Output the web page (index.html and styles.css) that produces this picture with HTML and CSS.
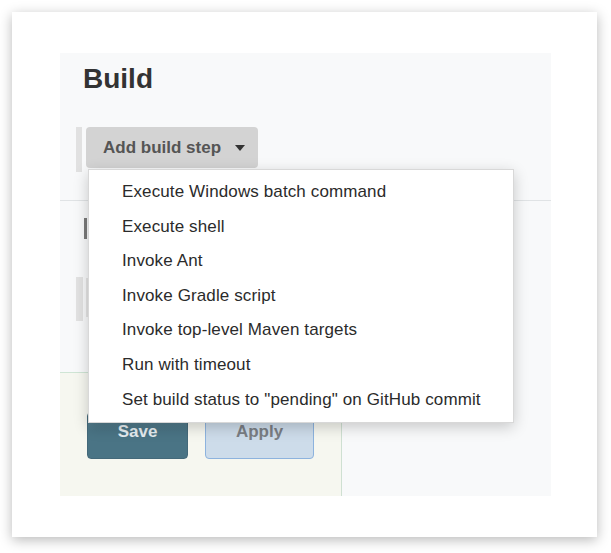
FILE: index.html
```html
<!DOCTYPE html>
<html>
<head>
<meta charset="utf-8">
<link rel="stylesheet" href="styles.css">
</head>
<body>
<div class="card">
  <div class="panel">
    <h1 class="title">Build</h1>
    <div class="toolbar">
      <span class="toolbar-bar"></span>
      <button class="add-btn">Add build step
        <svg class="caret" width="10" height="6" viewBox="0 0 10 6"><path d="M0 0 H10 L5 6 Z" fill="#333"/></svg>
      </button>
    </div>
    <div class="section">
      <span class="mark-dark"></span>
      <div class="mark-row">
        <span class="mark-box"></span>
        <span class="mark-line"></span>
      </div>
    </div>
    <div class="footer">
      <button class="btn-save">Save</button>
      <button class="btn-apply">Apply</button>
    </div>
    <ul class="menu">
      <li>Execute Windows batch command</li>
      <li>Execute shell</li>
      <li>Invoke Ant</li>
      <li>Invoke Gradle script</li>
      <li>Invoke top-level Maven targets</li>
      <li>Run with timeout</li>
      <li>Set build status to "pending" on GitHub commit</li>
    </ul>
  </div>
</div>
</body>
</html>
```
FILE: styles.css
```css
* { box-sizing: border-box; }
html, body { margin: 0; padding: 0; background: #ffffff; }
body {
  font-family: "Liberation Sans", Arial, sans-serif;
  width: 611px;
  height: 553px;
  overflow: hidden;
  padding: 12px 14px 0 12px;
}
.card {
  width: 585px;
  height: 525px;
  background: #ffffff;
  box-shadow: 0 3px 12px rgba(0,0,0,0.28);
  padding: 41px 46px 0 48px;
}
.panel {
  position: relative;
  height: 443px;
  background: #f8f9fa;
  padding-top: 10px;
  display: flex;
  flex-direction: column;
}
.title {
  margin: 0 0 0 23px;
  font-size: 28px;
  line-height: 32px;
  font-weight: bold;
  color: #333333;
}
.toolbar {
  margin-top: 32px;
  padding-left: 16px;
  display: flex;
  gap: 4px;
  height: 45px;
}
.toolbar-bar {
  width: 6px;
  height: 45px;
  background: #e1e1e1;
}
.add-btn {
  width: 172px;
  height: 41px;
  border: none;
  border-radius: 4px;
  background: #d3d3d3;
  color: #555555;
  font-family: "Liberation Sans", Arial, sans-serif;
  font-size: 17px;
  font-weight: bold;
  padding: 0 0 0 17px;
  display: flex;
  align-items: center;
  gap: 14px;
  text-align: left;
}
.caret { margin-top: 1px; }
.section {
  margin-top: 28px;
  border-top: 1px solid #e0e3e5;
  height: 172px;
  padding: 17px 0 0 16px;
  display: flex;
  flex-direction: column;
}
.mark-dark {
  margin-left: 8px;
  width: 3px;
  height: 21px;
  background: #7a7a7a;
}
.mark-row {
  margin-top: 38px;
  display: flex;
  gap: 3px;
}
.mark-box {
  width: 7px;
  height: 44px;
  background: #e2e2e2;
}
.mark-line {
  margin-top: 1px;
  width: 2px;
  height: 39px;
  background: #e4e4e4;
}
.footer {
  flex: 1;
  width: 282px;
  background: #f6f7f0;
  border-top: 1px solid #cfe5d5;
  border-right: 1px solid #cfe0d2;
  padding: 39px 0 0 27px;
  display: flex;
  align-items: flex-start;
  gap: 17px;
}
.btn-save, .btn-apply {
  height: 47px;
  border-radius: 4px;
  font-family: "Liberation Sans", Arial, sans-serif;
  font-size: 17px;
  font-weight: bold;
  padding: 0;
  padding-bottom: 7px;
}
.btn-save {
  width: 101px;
  background: linear-gradient(#5d8594, #4a7485 40%, #4a7485);
  border: 1px solid #44697a;
  color: #e6edf0;
}
.btn-apply {
  width: 109px;
  background: #cddcea;
  border: 1px solid #8db3de;
  color: #7a7e84;
}
.menu {
  position: absolute;
  left: 28px;
  top: 116px;
  width: 426px;
  margin: 0;
  padding: 5px 0;
  list-style: none;
  background: #ffffff;
  border: 1px solid #d8d8d8;
  box-shadow: 0 4px 14px rgba(0,0,0,0.2);
}
.menu li {
  padding-left: 33px;
  height: 34.6px;
  line-height: 34.6px;
  font-size: 17px;
  letter-spacing: 0.12px;
  color: #2b2b2b;
  white-space: nowrap;
}
```
